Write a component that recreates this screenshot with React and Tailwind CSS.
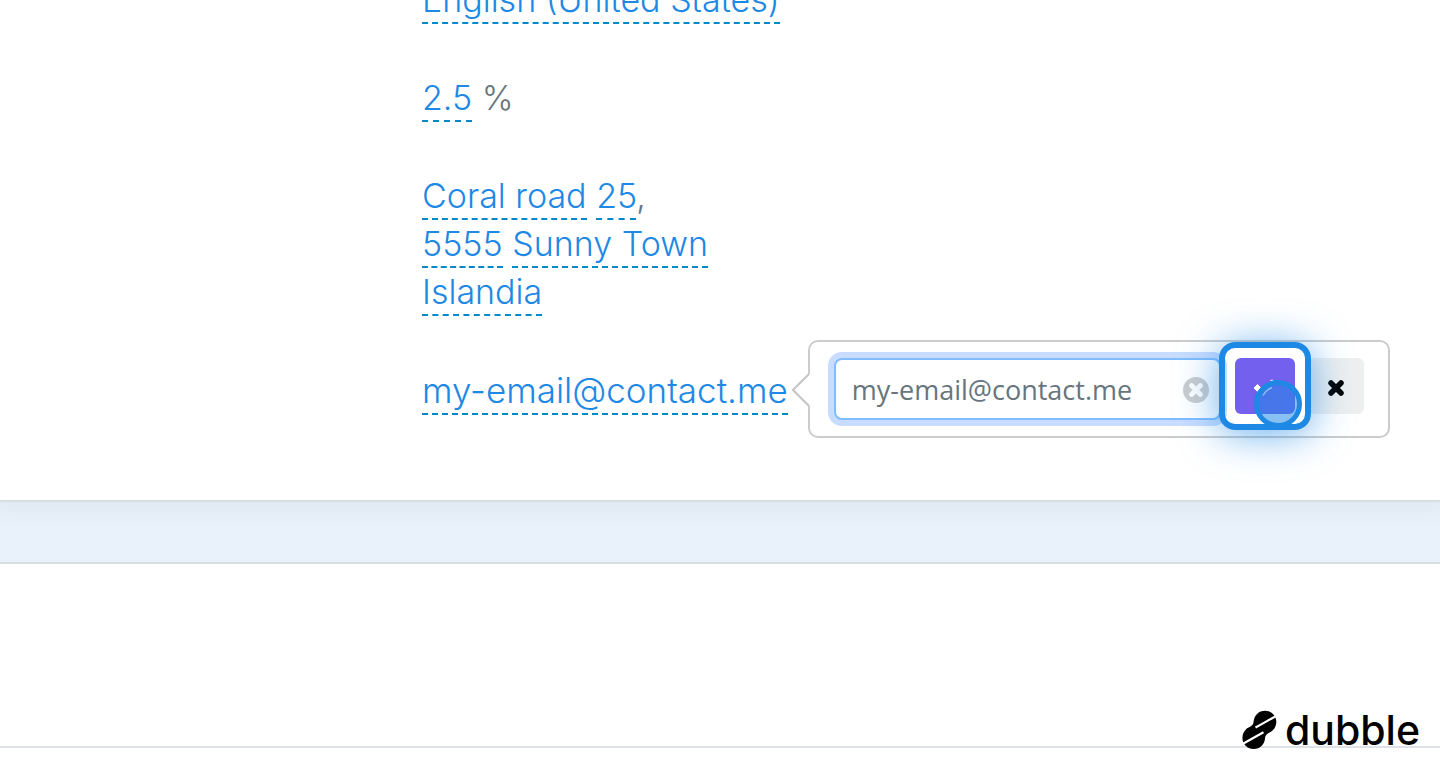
const Editable = ({ children }) => (
    <a href="#" className="border-b-2 border-dashed border-[#0088cc] pb-0.5 text-[#1e88e5]">
        {children}
    </a>
);

const CrossIcon = ({ className }) => (
    <svg viewBox="0 0 18 18" className={className}>
        <path d="M4 4L14 14M14 4L4 14" stroke="currentColor" strokeWidth="5.500" strokeLinecap="round" />
    </svg>
);

const DubbleLogo = () => (
    <div className="absolute right-5 bottom-4 flex items-center gap-2 text-black">
        <svg viewBox="0 0 36 40" className="h-10 w-9">
            <g fill="currentColor">
                <circle cx="24" cy="12" r="11.300" />
                <circle cx="12.700" cy="27.700" r="11.300" />
                <path d="M12.800 11C13 15 9 17 5 19.500L23.900 29C24 25 27 23 31.500 20.500Z" />
            </g>
            <path d="M35.500 5.800L18 15.600L14.500 17.500" stroke="#fff" strokeWidth="2.200" fill="none" />
            <path d="M1.500 34L22.500 22.300" stroke="#fff" strokeWidth="2.200" fill="none" />
        </svg>
        <span className="text-[41px] leading-10 font-medium">dubble</span>
    </div>
);

const EmailPopover = () => (
    <form
        className="absolute -top-[26px] left-full ml-5 flex w-[582px] items-start rounded-[10px] border-2 border-[#cccccc] bg-white px-6 py-4"
        onSubmit={(e) => e.preventDefault()}
    >
        <svg viewBox="0 0 18 32" className="absolute top-8 -left-[18px] h-8 w-[18px]">
            <path d="M18 0L16 1L1 16L16 31L18 32Z" fill="#fff" />
            <path d="M17 0L1 16L17 32" fill="none" stroke="#c4c4c4" strokeWidth="2" />
        </svg>
        <div className="relative min-w-0 flex-1">
            <input
                type="text"
                aria-label="Email"
                defaultValue="my-email@contact.me"
                className="h-[62px] w-full rounded-lg border-2 border-[#80bdff] bg-white pr-12 pl-4 font-['Open_Sans',sans-serif] text-[27px] font-normal text-[#67757c] ring-6 ring-[#c8dcff] outline-none"
            />
            <button type="button" aria-label="Clear" className="absolute top-[19px] right-3 flex size-[26px] items-center justify-center rounded-full bg-[#cccccc] text-white">
                <CrossIcon className="size-4" />
            </button>
        </div>
        <div className="relative ml-3.5 shrink-0">
            <button type="submit" aria-label="Save" className="block h-14 w-[60px] rounded-md bg-[#7460ee] text-white">
                <svg viewBox="0 0 60 56" className="h-14 w-[60px]">
                    <path d="M22.500 26.500L26 30L22.500 33.500L19 30Z" fill="currentColor" stroke="currentColor" strokeLinejoin="round" />
                    <path d="M34.500 23L37 21.500L39 23Z" fill="currentColor" />
                    <path d="M28 37.500Q31 32 37 29.500" fill="none" stroke="currentColor" strokeWidth="1.500" />
                </svg>
            </button>
            <div className="pointer-events-none absolute -inset-4 rounded-2xl border-6 border-[#1e88e5] shadow-[0_4px_40px_#1e88e5aa]" />
            <div className="pointer-events-none absolute top-[22px] left-[19px] size-12 rounded-full border-5 border-[#1e88e5] bg-[#1e88e588]" />
        </div>
        <button type="button" aria-label="Cancel" className="ml-3.5 flex h-14 w-[55px] items-center justify-center rounded-md bg-[#eeefef] pt-1 text-black">
            <CrossIcon className="size-[18px]" />
        </button>
    </form>
);

const App = () => (
    <div className="relative min-h-screen overflow-hidden bg-[#e9f1fa] font-['Inter',sans-serif]">
        <section className="border-b-2 border-[#d7dfe3] bg-white pb-[86px] pl-[422px] text-[34px] leading-[48px] font-light text-[#67757c] shadow-[0_2px_20px_8px_#0000000a]">
            <div className="flex h-6 items-end">
                <p><Editable>English (United States)</Editable></p>
            </div>
            <p className="mt-[50px]"><Editable>2.5</Editable> %</p>
            <address className="mt-[50px] not-italic">
                <Editable>Coral road</Editable> <Editable>25</Editable>,<br />
                <Editable>5555</Editable> <Editable>Sunny Town</Editable><br />
                <Editable>Islandia</Editable>
            </address>
            <div className="relative mt-[50px] w-fit text-[35px]">
                <Editable>my-email@contact.me</Editable>
                <EmailPopover />
            </div>
        </section>
        <section className="mt-[60px] border-t-2 border-[#d7dfe3] bg-white pt-[182px]">
            <div className="h-5 border-t-2 border-[#dee2e6]" />
        </section>
        <DubbleLogo />
    </div>
);

export default App;
